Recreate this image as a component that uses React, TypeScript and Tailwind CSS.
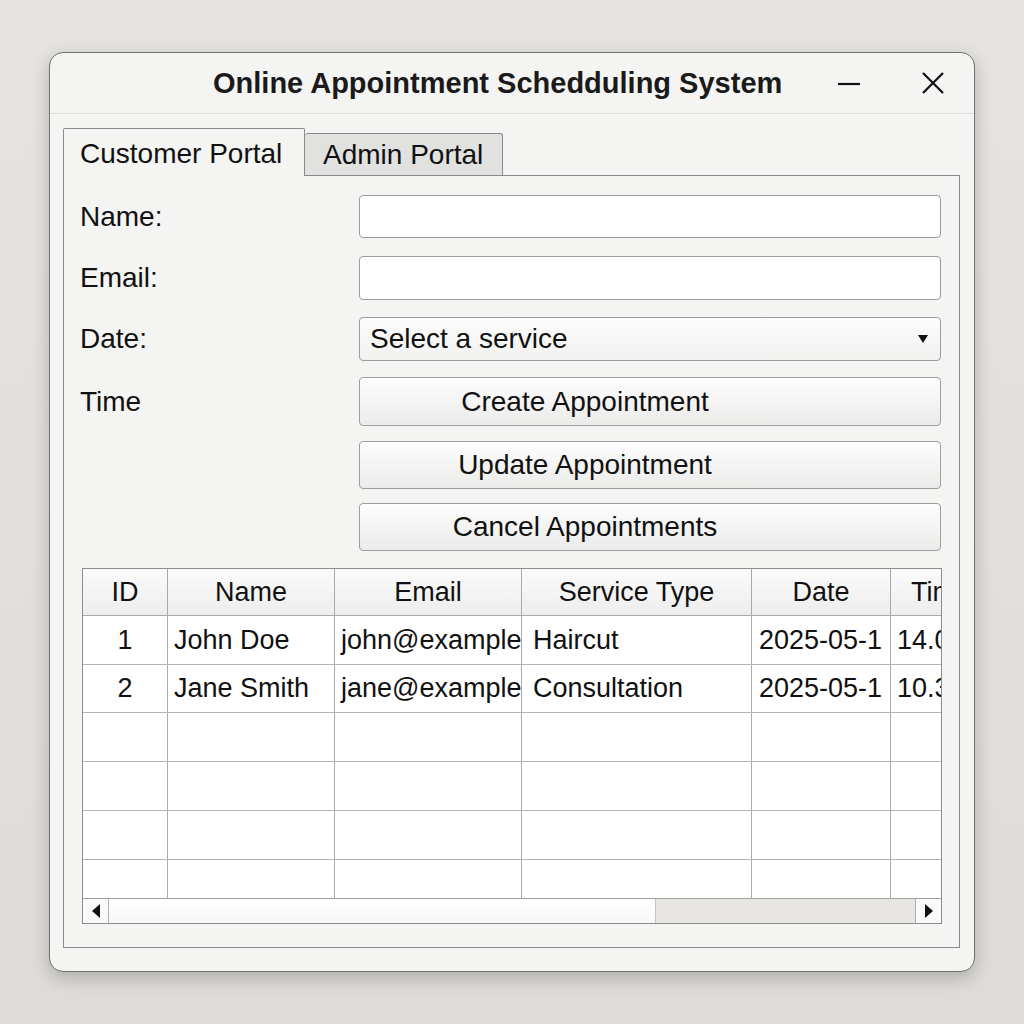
import React from 'react';

const font = { fontFamily: '"Liberation Sans", Arial, sans-serif' };

interface Appointment {
  id: number;
  name: string;
  email: string;
  service: string;
  date: string;
  time: string;
}

// values as they show in the clipped grid
const appointments: Appointment[] = [
  { id: 1, name: 'John Doe', email: 'john@example', service: 'Haircut', date: '2025-05-1', time: '14.00' },
  { id: 2, name: 'Jane Smith', email: 'jane@example', service: 'Consultation', date: '2025-05-1', time: '10.30' },
];

// column widths include the right grid line
const cols = ['w-[85px]', 'w-[167px]', 'w-[187px]', 'w-[230px]', 'w-[139px]', 'w-[100px]'];
const headers = ['ID', 'Name', 'Email', 'Service Type', 'Date', 'Time'];
const rowHeights = ['h-[49px]', 'h-[48px]', 'h-[49px]', 'h-[49px]', 'h-[49px]', 'h-[49px]'];

function Label({ children }: { children: React.ReactNode }) {
  return <div className="w-[279px] shrink-0 text-[28px] text-[#111]">{children}</div>;
}

function ActionButton({ label, height }: { label: string; height: string }) {
  return (
    <button
      className={`${height} w-[582px] rounded-[4px] border border-[#9e9e9e] bg-gradient-to-b from-[#fdfdfd] to-[#ebebea] pr-[130px] text-center text-[28px] text-[#111]`}
    >
      {label}
    </button>
  );
}

function AppointmentTable() {
  return (
    <div className="w-[860px] border border-[#8c8c8c] bg-white">
      <div className="h-[329px] overflow-hidden">
        <div className="flex w-[960px] flex-col">
          {/* header */}
          <div className="flex h-[47px] border-b border-[#a9a9a9] bg-gradient-to-b from-[#fbfbfb] to-[#ededed]">
            {headers.map((h, i) => (
              <div
                key={h}
                className={`${cols[i]} flex shrink-0 items-center justify-center border-r border-[#a9a9a9] text-[27px] text-[#111]`}
              >
                {h}
              </div>
            ))}
          </div>
          {rowHeights.map((rh, r) => {
            const a = appointments[r];
            const cells = a ? [String(a.id), a.name, a.email, a.service, a.date, a.time] : ['', '', '', '', '', ''];
            return (
              <div key={r} className={`flex ${rh} border-b border-[#b4b4b4]`}>
                {cells.map((c, i) => (
                  <div
                    key={i}
                    className={`${cols[i]} flex shrink-0 items-center overflow-hidden whitespace-nowrap border-r border-[#a9a9a9] text-[27px] text-[#111] ${
                      i === 0 ? 'justify-center' : i === 3 ? 'pl-[11px]' : i === 4 ? 'pl-[7px]' : 'pl-[6px]'
                    }`}
                  >
                    {c}
                  </div>
                ))}
              </div>
            );
          })}
        </div>
      </div>
      {/* horizontal scrollbar */}
      <div className="flex h-[25px] border-t border-[#a0a0a0]">
        <div className="flex w-[26px] items-center justify-center border-r border-[#b0b0b0] bg-[#fafafa]">
          <svg width="8" height="14" viewBox="0 0 8 14">
            <path d="M8 0 L0 7 L8 14 Z" fill="#111" />
          </svg>
        </div>
        <div className="w-[547px] border-r border-[#c4c4c4] bg-gradient-to-b from-[#ffffff] to-[#f7f7f6]" />
        <div className="flex-1 bg-[#e8e6e3]" />
        <div className="flex w-[26px] items-center justify-center border-l border-[#b0b0b0] bg-[#fafafa]">
          <svg width="8" height="14" viewBox="0 0 8 14">
            <path d="M0 0 L8 7 L0 14 Z" fill="#111" />
          </svg>
        </div>
      </div>
    </div>
  );
}

export default function App() {
  return (
    <div className="min-h-[1024px] w-full bg-gradient-to-b from-[#e6e4e1] to-[#dedcd8] pl-[49px] pt-[52px]" style={font}>
      <div className="flex h-[920px] w-[926px] flex-col rounded-[14px] border border-[#707070] bg-[#f4f4f2] shadow-[0_6px_18px_rgba(0,0,0,0.22)]">
        {/* title bar */}
        <div className="flex h-[61px] shrink-0 items-center border-b border-[#dddddb]">
          <div className="ml-[163px] pt-[2px] text-[29px] font-semibold text-[#1a1a1a]">Online Appointment Schedduling System</div>
          <div className="ml-auto mr-[30px] flex items-center gap-[62px]">
            <svg width="22" height="22" viewBox="0 0 22 22">
              <path d="M0 12 H22" stroke="#111" strokeWidth="2.2" />
            </svg>
            <svg width="22" height="22" viewBox="0 0 22 22">
              <path d="M1 1 L21 21 M21 1 L1 21" stroke="#111" strokeWidth="2.2" />
            </svg>
          </div>
        </div>

        <div className="flex flex-col pl-[13px] pt-[14px]">
          {/* tabs */}
          <div className="flex items-end">
            <div className="relative z-10 -mb-px flex h-[48px] w-[242px] items-center rounded-t-[2px] border border-b-0 border-[#8a8a8a] bg-[#f4f4f2] pl-[16px] pt-[2px] text-[28px] text-[#111]">
              Customer Portal
            </div>
            <div className="flex h-[42px] w-[198px] items-center rounded-t-[3px] border border-l-0 border-b-0 border-[#8a8a8a] bg-[#e1e1e0] pl-[18px] text-[28px] text-[#111]">
              Admin Portal
            </div>
          </div>

          {/* pane */}
          <div className="flex h-[773px] w-[897px] flex-col border border-[#8a8a8a] pl-[16px] pt-[19px]">
            <div className="flex h-[43px] items-center">
              <Label>Name:</Label>
              <input className="h-[43px] w-[582px] rounded-[4px] border border-[#9c9c9c] bg-white" />
            </div>
            <div className="mt-[18px] flex h-[44px] items-center">
              <Label>Email:</Label>
              <input className="h-[44px] w-[582px] rounded-[4px] border border-[#9c9c9c] bg-white" />
            </div>
            <div className="mt-[17px] flex h-[44px] items-center">
              <Label>Date:</Label>
              <div className="flex h-[44px] w-[582px] items-center rounded-[4px] border border-[#9c9c9c] bg-gradient-to-b from-[#fcfcfc] to-[#f1f1f0] pl-[10px] pr-[12px] text-[28px] text-[#111]">
                <span className="flex-1">Select a service</span>
                <svg width="10" height="8" viewBox="0 0 10 8">
                  <path d="M0 0 H10 L5 8 Z" fill="#111" />
                </svg>
              </div>
            </div>
            <div className="mt-[16px] flex items-center">
              <Label>Time</Label>
              <ActionButton label="Create Appointment" height="h-[49px]" />
            </div>
            <div className="mt-[15px] flex pl-[279px]">
              <ActionButton label="Update Appointment" height="h-[48px]" />
            </div>
            <div className="mt-[14px] flex pl-[279px]">
              <ActionButton label="Cancel Appointments" height="h-[48px]" />
            </div>
            <div className="ml-[2px] mt-[17px]">
              <AppointmentTable />
            </div>
          </div>
        </div>
      </div>
    </div>
  );
}
